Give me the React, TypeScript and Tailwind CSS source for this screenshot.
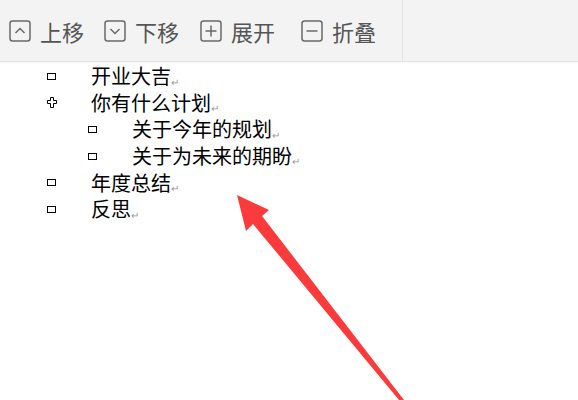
import React from 'react';

type Row = { text: string; level: number; bullet: 'box' | 'plus' };

const rows: Row[] = [
  { text: '开业大吉', level: 0, bullet: 'box' },
  { text: '你有什么计划', level: 0, bullet: 'plus' },
  { text: '关于今年的规划', level: 1, bullet: 'box' },
  { text: '关于为未来的期盼', level: 1, bullet: 'box' },
  { text: '年度总结', level: 0, bullet: 'box' },
  { text: '反思', level: 0, bullet: 'box' },
];

const ToolIcon: React.FC<{ kind: 'up' | 'down' | 'plus' | 'minus' }> = ({ kind }) => (
  <svg width="22" height="22" viewBox="0 0 22 22" fill="none" stroke="#6a6a6a" strokeWidth="1.5">
    <rect x="1" y="1" width="20" height="20" rx="2.5" />
    {kind === 'up' && <path d="M6.5 13 L11 8.5 L15.5 13" />}
    {kind === 'down' && <path d="M6.5 9 L11 13.5 L15.5 9" />}
    {kind === 'plus' && <path d="M11 5.5 V16.5 M5.5 11 H16.5" />}
    {kind === 'minus' && <path d="M5.5 11 H16.5" />}
  </svg>
);

const tools = [
  { kind: 'up' as const, label: '上移', ml: 'ml-[9px]' },
  { kind: 'down' as const, label: '下移', ml: 'ml-[20px]' },
  { kind: 'plus' as const, label: '展开', ml: 'ml-[21px]' },
  { kind: 'minus' as const, label: '折叠', ml: 'ml-[26px]' },
];

const Bullet: React.FC<{ kind: 'box' | 'plus' }> = ({ kind }) =>
  kind === 'box' ? (
    <span className="block w-[9px] h-[7px] border border-black" />
  ) : (
    <svg width="10" height="11" viewBox="0 0 10 11" fill="none" stroke="#000" strokeWidth="1">
      <path d="M3.5 0.5 H6.5 V3.5 H9.5 V6.5 H6.5 V10.5 H3.5 V6.5 H0.5 V3.5 H3.5 Z" />
    </svg>
  );

export default function App() {
  return (
    <div
      className="relative w-[578px] h-[400px] overflow-hidden bg-white"
      style={{ fontFamily: '"Noto Sans CJK SC", "Noto Sans", sans-serif' }}
    >
      {/* Toolbar */}
      <div className="flex h-[62px] bg-[#f3f3f3] border-b border-[#e4e4e4] shadow-[0_1px_2px_rgba(0,0,0,0.04)]">
        <div className="flex items-center w-[403px] border-r border-[#e2e2e2] pt-[1px]">
          {tools.map(t => (
            <div key={t.label} className={`flex items-center ${t.ml}`}>
              <ToolIcon kind={t.kind} />
              <span className="ml-[9px] text-[22px] leading-none text-[#555]">{t.label}</span>
            </div>
          ))}
        </div>
        <div className="flex-1" />
      </div>

      {/* Outline list */}
      <div className="pt-[1px]">
        {rows.map(r => (
          <div
            key={r.text}
            className={`flex items-center h-[26.6px] ${r.level === 1 ? 'pl-[88px]' : 'pl-[47px]'}`}
          >
            <div className="w-[44px] flex items-center">
              <Bullet kind={r.bullet} />
            </div>
            <span className="text-[20px] leading-none text-black">{r.text}</span>
            <span className="self-end mb-[3px] text-[10px] leading-none text-[#9a9a9a]">↵</span>
          </div>
        ))}
      </div>

      {/* Red arrow annotation */}
      <svg className="absolute left-0 top-0" width="578" height="400" viewBox="0 0 578 400">
        <polygon
          points="237,195 269,210 262,216 404,400 399,400 253,224 246,231"
          fill="#fb3b3b"
        />
      </svg>
    </div>
  );
}
